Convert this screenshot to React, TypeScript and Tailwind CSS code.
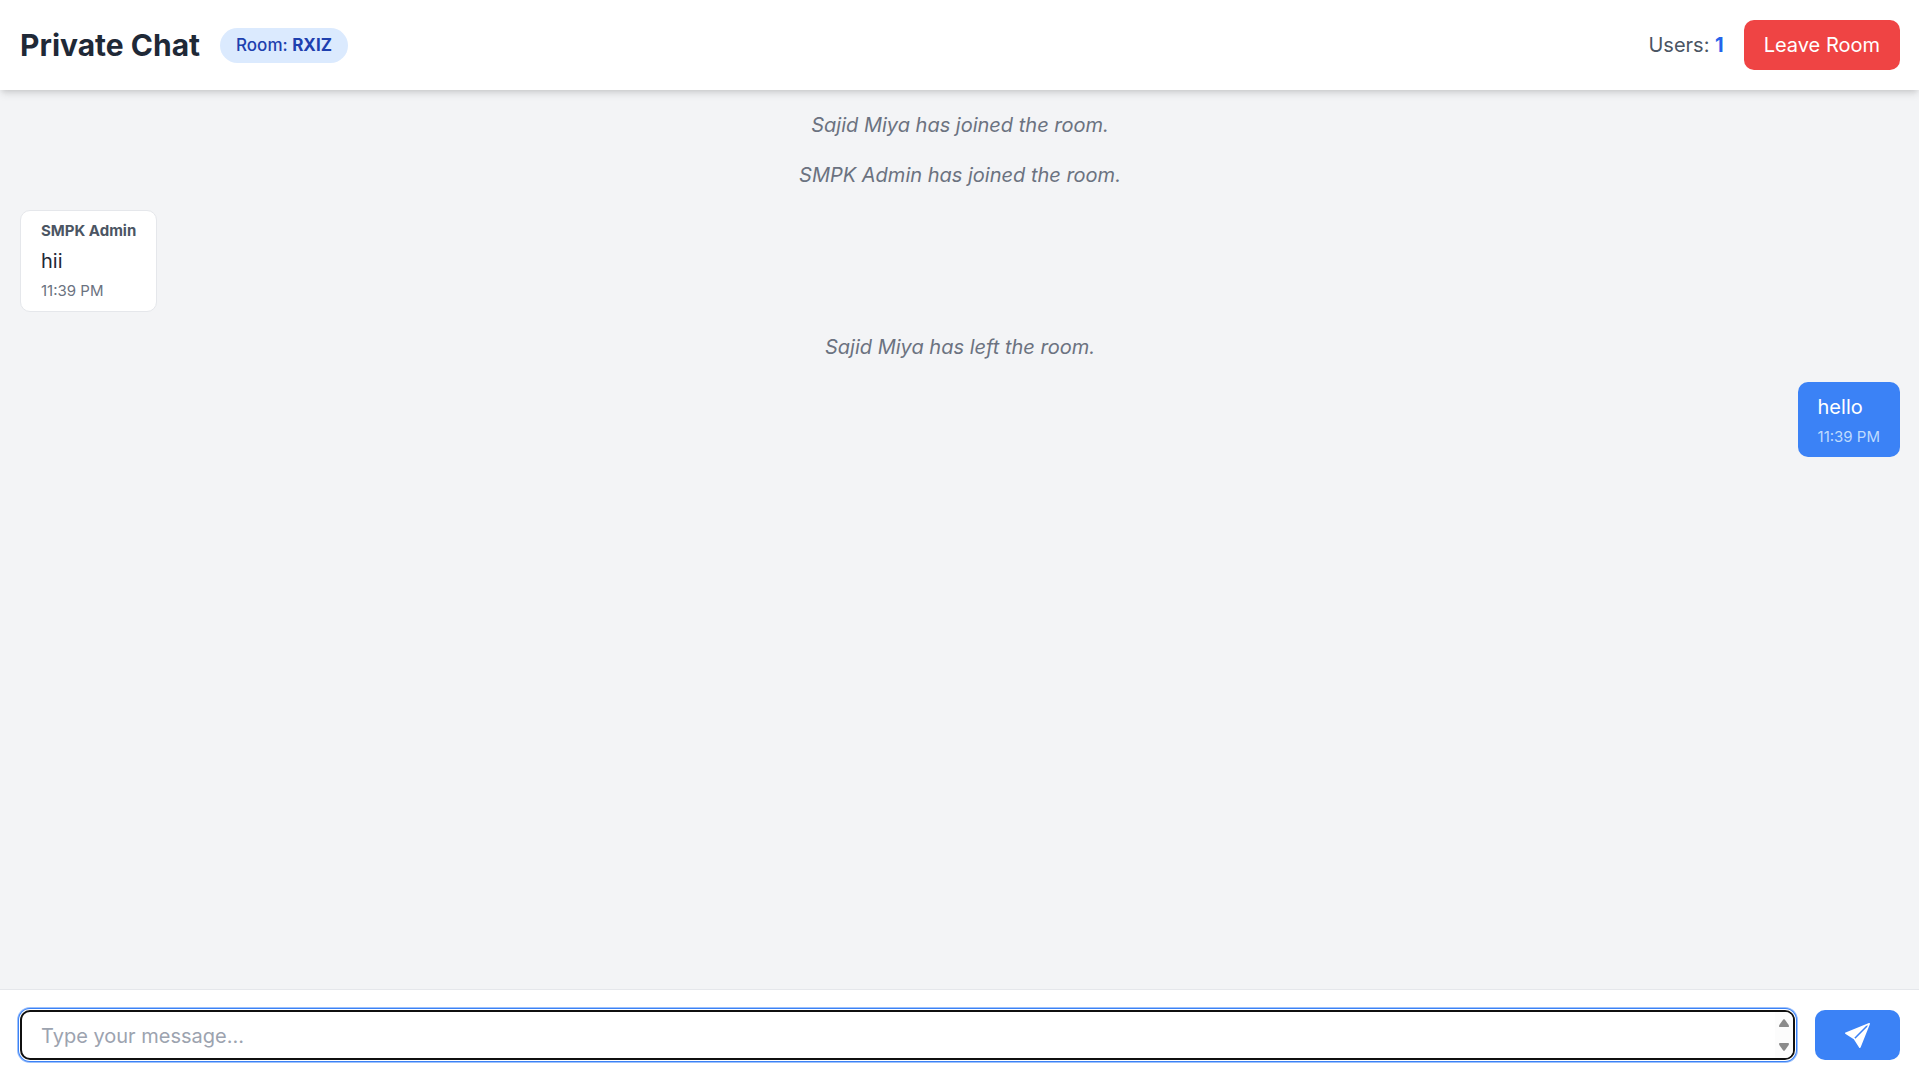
import { useState } from "react";

type Message =
  | { kind: "notice"; text: string }
  | { kind: "incoming"; author: string; text: string; time: string }
  | { kind: "outgoing"; text: string; time: string };

const messages: Message[] = [
  { kind: "notice", text: "Sajid Miya has joined the room." },
  { kind: "notice", text: "SMPK Admin has joined the room." },
  { kind: "incoming", author: "SMPK Admin", text: "hii", time: "11:39 PM" },
  { kind: "notice", text: "Sajid Miya has left the room." },
  { kind: "outgoing", text: "hello", time: "11:39 PM" },
];

function MessageRow({ message }: { message: Message }) {
  if (message.kind === "notice") {
    return <p className="text-center text-[#6b7280] italic">{message.text}</p>;
  }
  if (message.kind === "incoming") {
    return (
      <article className="self-start rounded-[10px] border border-[#e5e7eb] bg-white px-5 py-2.5 text-[#1f2937]">
        <h2 className="mb-[5px] text-[15px] leading-5 font-bold text-[#4b5563]">{message.author}</h2>
        <p>{message.text}</p>
        <time className="mt-[5px] block text-[15px] leading-5 text-[#6b7280]">{message.time}</time>
      </article>
    );
  }
  return (
    <article className="self-end rounded-[10px] bg-[#3b82f6] px-5 py-2.5 text-white">
      <p>{message.text}</p>
      <time className="mt-[5px] block text-[15px] leading-5 text-[#bfdbfe]">{message.time}</time>
    </article>
  );
}

export default function App() {
  const [draft, setDraft] = useState("");
  return (
    <div className="flex h-screen flex-col bg-[#f3f4f6] font-['Inter',sans-serif] text-[20px] leading-[30px]">
      <header className="relative flex items-center justify-between bg-white py-5 pr-[19px] pl-5 shadow-[0_5px_8px_-1px_rgba(0,0,0,0.1),0_3px_5px_-2px_rgba(0,0,0,0.1)]">
        <div className="flex items-center gap-5">
          <h1 className="text-[30px] leading-10 font-bold text-[#1f2937]">Private Chat</h1>
          <span className="rounded-full bg-[#dbeafe] px-4 py-[5px] text-[17px] leading-[25px] font-medium text-[#1e40af]">
            Room: <strong className="font-bold">RXIZ</strong>
          </span>
        </div>
        <div className="flex items-center gap-5">
          <span className="text-[#4b5563]">
            Users: <strong className="font-bold text-[#2563eb]">1</strong>
          </span>
          <button type="button" className="rounded-[10px] bg-[#ef4444] px-5 py-2.5 text-white">
            Leave Room
          </button>
        </div>
      </header>

      <main className="flex min-h-0 flex-1 flex-col gap-5 overflow-hidden py-5 pr-[19px] pl-5">
        {messages.map((message, i) => (
          <MessageRow key={i} message={message} />
        ))}
      </main>

      <form
        className="flex gap-5 border-t border-[#e5e7eb] bg-white pt-5 pr-[19px] pb-[19px] pl-5"
        onSubmit={(e) => e.preventDefault()}
      >
        <div className="flex h-[50px] flex-1 overflow-hidden rounded-[10px] border-2 border-[#101010] bg-white shadow-[0_0_0_1px_#ffffff,0_0_0_2px_#3b82f6,0_0_0_3px_#9dc1fb]">
          <textarea
            rows={1}
            aria-label="Message"
            placeholder="Type your message..."
            value={draft}
            onChange={(e) => setDraft(e.target.value)}
            className="min-w-0 flex-1 resize-none overflow-hidden px-[19px] pt-[9px] pb-[7px] outline-none placeholder:text-[#9ca3af]"
          />
          <div aria-hidden="true" className="flex w-[18px] flex-col items-center justify-between bg-[#fcfcfc] py-[7px]">
            <svg width="10" height="8" viewBox="0 0 10 8" fill="#8b8b8b">
              <path d="M4.2.6Q5-.3 5.8.6L9.7 6Q10.5 8 9 8H1Q-.5 8 .3 6Z" />
            </svg>
            <svg width="10" height="8" viewBox="0 0 10 8" fill="#8b8b8b">
              <path d="M4.2 7.4Q5 8.3 5.8 7.4L9.7 2Q10.5 0 9 0H1Q-.5 0 .3 2Z" />
            </svg>
          </div>
        </div>
        <button
          type="submit"
          aria-label="Send message"
          className="flex h-[50px] w-[85px] items-center justify-center rounded-[10px] bg-[#3b82f6] text-white"
        >
          <svg width="25" height="25" viewBox="0 0 16 16" fill="currentColor">
            <path d="M15.964.686a.5.5 0 0 0-.65-.65L.767 5.855H.766l-.452.18a.5.5 0 0 0-.082.887l.41.26.001.002 4.995 3.178 3.178 4.995.002.002.26.41a.5.5 0 0 0 .886-.083zm-1.833 1.89L6.637 10.07l-.215-.338a.5.5 0 0 0-.154-.154l-.338-.215 7.494-7.494 1.178-.471z" />
          </svg>
        </button>
      </form>
    </div>
  );
}
